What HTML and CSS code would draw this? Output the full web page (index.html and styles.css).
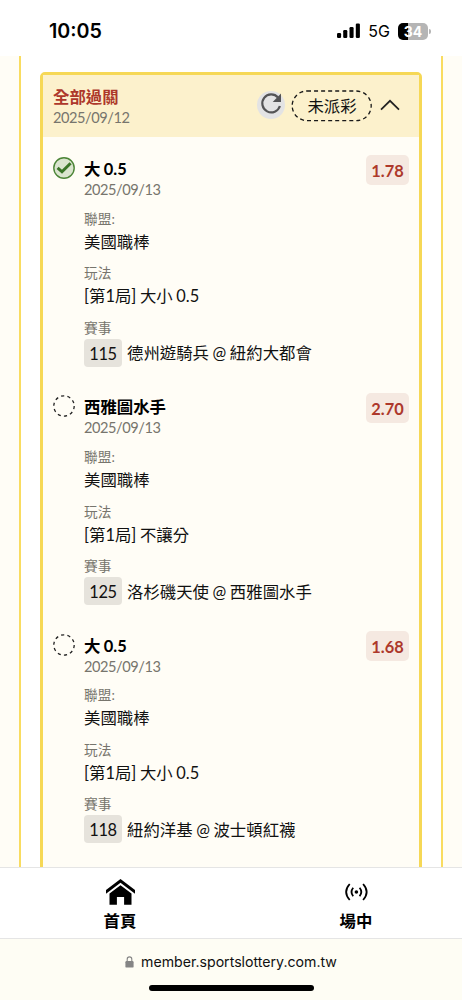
FILE: index.html
```
<!DOCTYPE html>
<html lang="zh-Hant">
<head>
<meta charset="utf-8">
<title>全部過關</title>
<link rel="stylesheet" href="styles.css">
</head>
<body>
<div class="screen">
  <header class="status">
    <span class="clock">10:05</span>
    <svg class="signal" width="24" height="16" viewBox="0 0 24 16"><rect x="0" y="10" width="4.1" height="5" rx="1.2"/><rect x="6.2" y="7" width="4.1" height="8" rx="1.2"/><rect x="12.5" y="4" width="4.1" height="11" rx="1.2"/><rect x="18.8" y="0.5" width="4.1" height="14.5" rx="1.2"/></svg>
    <span class="net">5G</span>
    <span class="battery">34</span><span class="cap"></span>
  </header>
  <main class="page">
    <section class="panel">
      <article class="card">
        <div class="head">
          <div class="head-text"><h1>全部過關</h1><time>2025/09/12</time></div>
          <svg class="refresh" width="28" height="28" viewBox="0 0 28 28"><circle cx="14" cy="14" r="14" fill="#e3e3e4"/><path d="M21 6.4A9 9 0 1 0 22.9 15" fill="none" stroke="#545456" stroke-width="2.2"/><path d="M24 2.6V11H15.7Z" fill="#545456"/></svg>
          <span class="pill"><svg width="82" height="32" viewBox="0 0 82 32"><rect x="1.2" y="1" width="79" height="29.6" rx="14.8" fill="none" stroke="#191919" stroke-width="1.3" stroke-dasharray="4 3.05"/></svg><span>未派彩</span></span>
          <svg class="chev" width="20" height="12" viewBox="0 0 20 12"><path d="M1 10.7 10 1.8 19 10.7" fill="none" stroke="#222" stroke-width="1.7"/></svg>
        </div>
        <div class="leg">
          <svg class="mark" width="24" height="24" viewBox="0 0 24 24"><circle cx="12" cy="12" r="10.2" fill="#dbe5cf" stroke="#4c8537" stroke-width="1.4"/><path d="M5.6 11.8 10 15.8 18.6 7.2" fill="none" stroke="#3b7528" stroke-width="3"/></svg>
          <div class="info"><h2>大 0.5</h2><time>2025/09/13</time>
            <dl><dt>聯盟:</dt><dd>美國職棒</dd><dt>玩法</dt><dd>[第1局] 大小 0.5</dd><dt>賽事</dt><dd class="match"><span class="no">115</span><span>德州遊騎兵 @ 紐約大都會</span></dd></dl></div>
          <span class="odds">1.78</span>
        </div>
        <div class="leg">
          <svg class="mark" width="24" height="24" viewBox="0 0 24 24"><circle cx="12" cy="12" r="10.2" fill="none" stroke="#222" stroke-width="1.3" stroke-dasharray="3.2 3.2"/></svg>
          <div class="info"><h2>西雅圖水手</h2><time>2025/09/13</time>
            <dl><dt>聯盟:</dt><dd>美國職棒</dd><dt>玩法</dt><dd>[第1局] 不讓分</dd><dt>賽事</dt><dd class="match"><span class="no">125</span><span>洛杉磯天使 @ 西雅圖水手</span></dd></dl></div>
          <span class="odds">2.70</span>
        </div>
        <div class="leg">
          <svg class="mark" width="24" height="24" viewBox="0 0 24 24"><circle cx="12" cy="12" r="10.2" fill="none" stroke="#222" stroke-width="1.3" stroke-dasharray="3.2 3.2"/></svg>
          <div class="info"><h2>大 0.5</h2><time>2025/09/13</time>
            <dl><dt>聯盟:</dt><dd>美國職棒</dd><dt>玩法</dt><dd>[第1局] 大小 0.5</dd><dt>賽事</dt><dd class="match"><span class="no">118</span><span>紐約洋基 @ 波士頓紅襪</span></dd></dl></div>
          <span class="odds">1.68</span>
        </div>
      </article>
    </section>
  </main>
  <nav class="tabs">
    <a class="tab"><svg width="30" height="28" viewBox="0 0 30 28"><path d="M15.5 1 30 12V15.7L15.5 4.7 1 15.7V12Z"/><path d="M15.5 7.2 26.5 15.5V26.8H19.1V19H11.9V26.8H4.5V15.5Z"/></svg><span>首頁</span></a>
    <a class="tab"><svg width="24" height="28" viewBox="0 0 24 28"><circle cx="12.4" cy="14" r="1.8"/><path d="M9.2 9.7Q5.8 14 9.2 18.3M15.6 9.7Q19 14 15.6 18.3M5.7 6Q-1.4 14 5.7 22M19.1 6Q26.2 14 19.1 22" fill="none" stroke="#000" stroke-width="1.8"/></svg><span>場中</span></a>
  </nav>
  <footer class="browser">
    <div class="url"><svg width="9" height="12" viewBox="0 0 9 12"><rect x=".4" y="5" width="8.2" height="6.6" rx="1.2" fill="#858585"/><path d="M2.2 5.5V3.2a2.3 2.3 0 0 1 4.6 0V5.5" fill="none" stroke="#858585" stroke-width="1.1"/></svg><span>member.sportslottery.com.tw</span></div>
    <div class="homebar"></div>
  </footer>
</div>
</body>
</html>
```
FILE: styles.css
```
* { box-sizing: border-box; margin: 0; padding: 0; }
body { background: #fff; color: #111; font-family: Lato, "Noto Sans CJK TC", sans-serif; }
svg { display: block; flex: none; }
.screen { width: 462px; height: 1000px; display: flex; flex-direction: column; overflow: hidden; }
.status { height: 56px; flex: none; display: flex; align-items: center; padding: 6px 34px 0 49px; font-family: Inter, sans-serif; color: #000; }
.clock { font-size: 19.7px; font-weight: 600; flex: 1; }
.net { font-size: 16px; margin: 0 8px 0 7px; }
.battery { width: 30px; height: 17px; border-radius: 5px; background: linear-gradient(90deg, #000 34%, #b5b5b5 34%); color: #fff; font-size: 14px; line-height: 17px; font-weight: 700; text-align: center; }
.cap { width: 2px; height: 5px; margin-left: 1px; background: #b5b5b5; border-radius: 0 3px 3px 0; margin-right: -3px; }
.page { flex: 1; min-height: 0; overflow: hidden; background: #fffdf6; padding: 0 19px; }
.panel { background: #fff; border: solid #f9dc60; border-width: 0 2.5px; height: 100%; padding: 16px 19px 0; }
.card { height: 900px; background: #fffdf6; border: 3px solid #f6d856; border-radius: 5px; }
.head { height: 62px; background: #fcf1cc; display: flex; align-items: center; padding: 0 19px 0 10px; }
.head-text { flex: 1; padding-top: 2px; }
h1 { color: #ad382b; font-size: 16.4px; line-height: 22px; font-weight: 700; }
time { display: block; font-size: 14.6px; letter-spacing: -.45px; line-height: 20px; color: #77756d; }
.refresh { margin-right: 6px; margin-bottom: 2px; }
.pill { position: relative; width: 82px; height: 32px; margin-right: 7px; }
.pill span { position: absolute; inset: 0; text-align: center; font-size: 16.4px; line-height: 31px; }
.chev { margin-bottom: 2px; }
.leg { height: 238.3px; padding: 20px 10px 0 9px; display: flex; align-items: flex-start; }
.mark { margin: -1px 8px 0 0; }
.info { flex: 1; word-spacing: -.6px; }
.info time { padding-top: 1px; height: 21px; }
h2 { font-size: 16.4px; line-height: 23px; height: 22px; font-weight: 700; color: #000; }
dl { padding-top: 8.8px; }
dt { font-size: 13.7px; line-height: 20px; color: #77756d; }
dd { font-size: 16.4px; line-height: 25px; margin-bottom: 9.5px; }
.match { display: flex; align-items: center; gap: 5px; margin: 1px 0 0; white-space: nowrap; }
.no { background: #e6e3dc; border-radius: 4px; width: 38px; height: 28px; line-height: 29px; text-align: center; letter-spacing: -.3px; }
.odds { width: 43px; height: 30px; margin-top: -2.5px; border-radius: 5px; background: #f5e9e1; color: #ad382b; font-size: 16.4px; line-height: 31px; font-weight: 700; text-align: center; }
.tabs { height: 72px; flex: none; background: #fff; border: solid #e5e5e5; border-width: 1px 0; display: flex; justify-content: space-between; padding: 10px 57px 0 71px; }
.tab { display: flex; flex-direction: column; align-items: center; width: 98px; font-size: 16.4px; font-weight: 700; line-height: 24px; color: #000; gap: 3px; }
.browser { height: 61px; flex: none; background: #fefdf4; display: flex; flex-direction: column; align-items: center; padding-top: 12px; }
.url { display: flex; align-items: center; gap: 7px; font: 14.15px/22px Inter, sans-serif; }
.homebar { width: 165px; height: 6px; border-radius: 3px; background: #000; margin-top: 12px; }
```
